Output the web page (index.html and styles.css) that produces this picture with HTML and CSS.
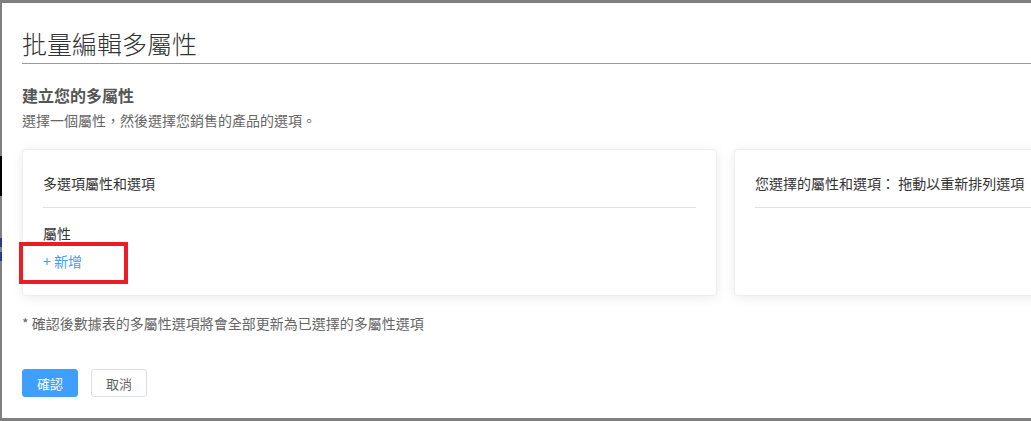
FILE: index.html
```html
<!DOCTYPE html>
<html lang="zh-Hant">

<head>
    <meta charset="UTF-8">
    <title>批量編輯多屬性</title>
    <link rel="stylesheet" href="styles.css">
</head>

<body>
    <div class="page">
        <div class="behind">
            <div class="behind-block"></div>
            <div class="behind-link"></div>
            <div class="behind-link behind-link-2"></div>
        </div>
        <div class="modal">
            <h1 class="modal-title">批量編輯多屬性</h1>
            <div class="intro">
                <h2>建立您的多屬性</h2>
                <p>選擇一個屬性，然後選擇您銷售的產品的選項。</p>
            </div>
            <div class="cards">
                <div class="card">
                    <div class="card-head">多選項屬性和選項</div>
                    <div class="card-body">
                        <div class="label">屬性</div>
                        <a class="add" href="#">+ 新增</a>
                    </div>
                    <span class="mark"></span>
                </div>
                <div class="card card-right">
                    <div class="card-head">您選擇的屬性和選項： 拖動以重新排列選項</div>
                </div>
            </div>
            <p class="note">* 確認後數據表的多屬性選項將會全部更新為已選擇的多屬性選項</p>
            <div class="actions">
                <button class="btn btn-primary">確認</button>
                <button class="btn">取消</button>
            </div>
        </div>
    </div>
</body>

</html>
```

FILE: styles.css
```css
* {
    margin: 0;
    padding: 0;
    box-sizing: border-box;
}

html,
body {
    width: 100%;
    height: 100%;
    background: #7f7f7f;
    overflow: hidden;
    font-family: "Noto Sans CJK TC", "Noto Sans", sans-serif;
}

.page {
    position: relative;
    height: 100%;
    padding: 3px 0 0 2px;
}

/* page under the overlay, only a sliver shows */
.behind {
    position: absolute;
    left: 0;
    top: 0;
    width: 2px;
    height: 100%;
}

.behind-block {
    position: absolute;
    top: 156px;
    width: 2px;
    height: 40px;
    background: #000;
}

.behind-link {
    position: absolute;
    top: 238px;
    width: 2px;
    height: 9px;
    background: #2b3a8c;
}

.behind-link-2 {
    top: 252px;
}

.modal {
    position: relative;
    background: #fff;
    height: 415px;
    padding: 0 0 0 20px;
}

.modal-title {
    font-size: 25px;
    font-weight: 300;
    color: #333;
    line-height: 34px;
    padding-top: 23px;
    padding-bottom: 3px;
    border-bottom: 1px solid #999;
}

.intro {
    padding-top: 20px;
}

.intro h2 {
    font-size: 16px;
    font-weight: bold;
    color: #555;
    line-height: 22px;
}

.intro p {
    font-size: 14px;
    color: #666;
    line-height: 18px;
    margin-top: 5px;
}

.cards {
    display: flex;
    gap: 17px;
    margin-top: 20px;
}

.card {
    position: relative;
    width: 695px;
    height: 147px;
    flex-shrink: 0;
    background: #fff;
    border: 1px solid #ebeef5;
    border-radius: 4px;
    box-shadow: 0 2px 12px 0 rgba(0, 0, 0, 0.08);
    padding: 0 20px;
}

.card-right {
    width: 320px;
}

.card-head {
    font-size: 14px;
    color: #333;
    line-height: 20px;
    padding: 23px 0 14px;
    border-bottom: 1px solid #dcdfe6;
    white-space: nowrap;
}

.card-body {
    padding-top: 15px;
}

.label {
    font-size: 14px;
    color: #333;
    line-height: 20px;
}

.add {
    display: inline-block;
    margin-top: 8px;
    font-size: 14px;
    line-height: 20px;
    color: #409eff;
    text-decoration: none;
}

/* red highlight drawn over the screenshot */
.mark {
    position: absolute;
    left: -4px;
    top: 92px;
    width: 109px;
    height: 42px;
    border: 4px solid #ec1c24;
}

.note {
    font-size: 14px;
    color: #666;
    line-height: 20px;
    margin-top: 17px;
}

.actions {
    display: flex;
    gap: 13px;
    margin-top: 36px;
}

.btn {
    width: 56px;
    height: 28px;
    font-family: inherit;
    font-size: 13px;
    color: #606266;
    background: #fff;
    border: 1px solid #dcdfe6;
    border-radius: 3px;
}

.btn-primary {
    color: #fff;
    background: #409eff;
    border-color: #409eff;
}
```
